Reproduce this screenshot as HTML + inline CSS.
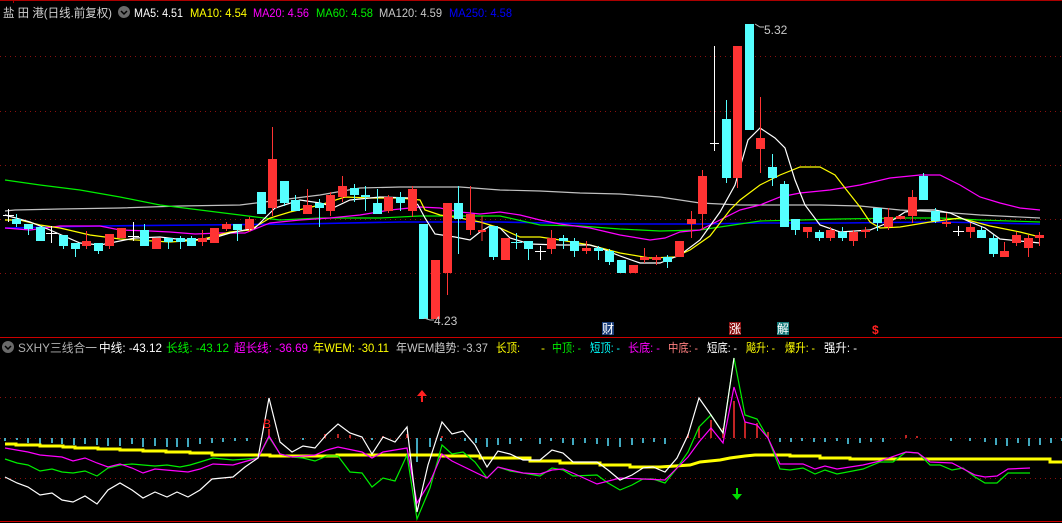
<!DOCTYPE html>
<html><head><meta charset="utf-8"><style>
html,body{margin:0;padding:0;background:#000;width:1062px;height:523px;overflow:hidden}
svg{display:block}
text{font-family:"Liberation Sans","Noto Sans CJK SC",sans-serif;font-size:12px}
</style></head><body>
<svg width="1062" height="523" viewBox="0 0 1062 523" xmlns="http://www.w3.org/2000/svg">
<rect width="1062" height="523" fill="#000"/>
<line x1="0" y1="0.5" x2="1062" y2="0.5" stroke="#a00"/>
<line x1="13.5" y1="0" x2="13.5" y2="3" stroke="#a00"/>
<!-- grid -->
<g stroke="#8a1010" stroke-dasharray="1,4">
<line x1="0" y1="56.5" x2="1062" y2="56.5"/><line x1="0" y1="111.5" x2="1062" y2="111.5"/>
<line x1="0" y1="165.5" x2="1062" y2="165.5"/><line x1="0" y1="219.5" x2="1062" y2="219.5"/>
<line x1="0" y1="273.5" x2="1062" y2="273.5"/>
<line x1="0" y1="397.5" x2="1062" y2="397.5"/><line x1="0" y1="438.5" x2="1062" y2="438.5"/>
<line x1="0" y1="478.5" x2="1062" y2="478.5"/>
</g>
<line x1="0" y1="337.5" x2="1062" y2="337.5" stroke="#c00"/>
<line x1="0" y1="521.5" x2="1062" y2="521.5" stroke="#c00"/>

<!-- MA lines -->
<g fill="none" stroke-width="1.2">
<polyline stroke="#c0c0c0" points="5,211 15,210 60,209 120,208 180,206 240,205 280,200 320,195 360,188 400,187 430,187 460,187 500,190 540,191 580,193 620,194 660,197 700,203 740,205 780,205 820,205 860,206 900,210 940,212 980,215 1040,218"/>
<polyline stroke="#0000ff" stroke-width="1.6" points="5,228 100,226 200,225 300,224 400,222 500,222 600,224 700,224 760,223 840,223 940,222 1040,224"/>
<polyline stroke="#00ee00" points="5,180 40,185 80,190 120,197 160,205 200,210 240,215 280,220 320,218 380,218 420,216 500,216 540,225 580,226 620,229 660,231 700,230 740,224 760,221 800,220 840,219 900,218 940,218 980,220 1040,222"/>
<polyline stroke="#ff00ff" points="5,228 30,230 60,226 100,226 120,230 150,231 170,232 195,234 220,233 245,233 270,223 300,220 330,218 360,215 390,210 420,207 440,208 460,212 480,214 500,212 520,215 540,220 560,224 590,228 620,235 650,240 665,238 680,232 700,230 720,220 740,210 760,205 780,197 800,193 830,190 860,185 890,178 920,175 940,175 960,185 980,197 1000,203 1020,208 1040,210"/>
<polyline stroke="#ffff00" points="5,220 20,220 40,225 60,228 90,235 120,239 170,242 200,240 230,232 250,230 270,218 290,212 320,205 345,197 370,198 400,198 420,200 425,210 440,215 460,218 480,222 500,228 520,237 540,237 560,240 590,245 620,253 650,258 675,257 690,250 710,236 730,210 740,200 760,185 780,175 800,167 820,167 835,175 845,188 860,207 870,222 880,228 900,227 930,222 960,218 990,226 1020,232 1040,237"/>
<polyline stroke="#ffffff" points="5,215 30,222 50,230 80,243 100,245 115,242 135,238 160,237 185,240 210,239 230,233 255,228 275,208 300,200 320,203 335,207 350,200 380,197 410,198 418,205 425,218 435,234 455,237 470,240 480,232 490,226 500,228 510,238 530,244 560,245 590,245 600,248 620,256 640,263 660,263 680,255 700,240 720,212 735,185 748,140 760,128 775,138 785,148 795,180 805,205 820,225 840,232 870,230 890,222 905,212 920,210 935,210 950,213 970,222 985,228 1000,239 1030,242 1040,243"/>
</g>

<!-- candles -->
<g stroke-width="1">
<g stroke="#55ffff">
<line x1="16.5" y1="214" x2="16.5" y2="227"/><line x1="28.5" y1="224" x2="28.5" y2="235"/><line x1="40.5" y1="226" x2="40.5" y2="241"/>
<line x1="63.5" y1="235" x2="63.5" y2="249"/><line x1="75.5" y1="243" x2="75.5" y2="257"/><line x1="98.5" y1="243" x2="98.5" y2="254"/>
<line x1="144.5" y1="224" x2="144.5" y2="246"/><line x1="168.5" y1="238" x2="168.5" y2="249"/><line x1="180.5" y1="236" x2="180.5" y2="249"/>
<line x1="191.5" y1="236" x2="191.5" y2="246"/><line x1="237.5" y1="224" x2="237.5" y2="241"/><line x1="284.5" y1="181" x2="284.5" y2="206"/>
<line x1="295.5" y1="195" x2="295.5" y2="211"/><line x1="319.5" y1="199" x2="319.5" y2="227"/><line x1="354.5" y1="184" x2="354.5" y2="202"/>
<line x1="365.5" y1="186" x2="365.5" y2="211"/><line x1="377.5" y1="189" x2="377.5" y2="214"/><line x1="400.5" y1="192" x2="400.5" y2="211"/>
<line x1="458.5" y1="186" x2="458.5" y2="254"/><line x1="493.5" y1="226" x2="493.5" y2="260"/><line x1="528.5" y1="241" x2="528.5" y2="260"/>
<line x1="563.5" y1="235" x2="563.5" y2="249"/><line x1="574.5" y1="238" x2="574.5" y2="257"/><line x1="598.5" y1="246" x2="598.5" y2="260"/>
<line x1="609.5" y1="249" x2="609.5" y2="265"/><line x1="667.5" y1="255" x2="667.5" y2="268"/><line x1="726.5" y1="100" x2="726.5" y2="183"/>
<line x1="772.5" y1="154" x2="772.5" y2="186"/><line x1="784.5" y1="181" x2="784.5" y2="227"/><line x1="795.5" y1="219" x2="795.5" y2="235"/>
<line x1="819.5" y1="230" x2="819.5" y2="241"/><line x1="842.5" y1="227" x2="842.5" y2="241"/><line x1="877.5" y1="208" x2="877.5" y2="231"/>
<line x1="923.5" y1="173" x2="923.5" y2="200"/><line x1="935.5" y1="208" x2="935.5" y2="223"/><line x1="981.5" y1="227" x2="981.5" y2="238"/>
<line x1="993.5" y1="235" x2="993.5" y2="257"/>
</g>
<g stroke="#ff3333">
<line x1="86.5" y1="231" x2="86.5" y2="249"/><line x1="109.5" y1="234" x2="109.5" y2="249"/><line x1="202.5" y1="230" x2="202.5" y2="246"/>
<line x1="226.5" y1="222" x2="226.5" y2="231"/><line x1="249.5" y1="217" x2="249.5" y2="232"/><line x1="272.5" y1="127" x2="272.5" y2="216"/>
<line x1="307.5" y1="189" x2="307.5" y2="214"/><line x1="330.5" y1="192" x2="330.5" y2="216"/><line x1="342.5" y1="176" x2="342.5" y2="202"/>
<line x1="388.5" y1="195" x2="388.5" y2="213"/><line x1="412.5" y1="186" x2="412.5" y2="217"/><line x1="447.5" y1="203" x2="447.5" y2="295"/>
<line x1="470.5" y1="186" x2="470.5" y2="235"/><line x1="482" y1="216" x2="482" y2="241"/><line x1="551.5" y1="230" x2="551.5" y2="254"/>
<line x1="586.5" y1="241" x2="586.5" y2="254"/><line x1="644.5" y1="248" x2="644.5" y2="263"/><line x1="656.5" y1="255" x2="656.5" y2="265"/>
<line x1="691.5" y1="211" x2="691.5" y2="238"/><line x1="702.5" y1="170" x2="702.5" y2="230"/><line x1="737.5" y1="46" x2="737.5" y2="188"/>
<line x1="760.5" y1="97" x2="760.5" y2="173"/><line x1="807.5" y1="227" x2="807.5" y2="238"/><line x1="830.5" y1="227" x2="830.5" y2="241"/>
<line x1="853.5" y1="230" x2="853.5" y2="246"/><line x1="865.5" y1="227" x2="865.5" y2="238"/><line x1="888.5" y1="208" x2="888.5" y2="230"/>
<line x1="912.5" y1="190" x2="912.5" y2="223"/><line x1="946.5" y1="213" x2="946.5" y2="227"/><line x1="970.5" y1="223" x2="970.5" y2="238"/>
<line x1="1004.5" y1="242" x2="1004.5" y2="257"/><line x1="1016.5" y1="232" x2="1016.5" y2="246"/><line x1="1028.5" y1="235" x2="1028.5" y2="257"/>
<line x1="1039.5" y1="232" x2="1039.5" y2="246"/>
</g>
<g stroke="#ffffff">
<line x1="8.5" y1="209" x2="8.5" y2="222"/><line x1="3" y1="215.5" x2="14" y2="215.5"/>
<line x1="51.5" y1="226" x2="51.5" y2="243"/><line x1="46" y1="233.5" x2="57" y2="233.5"/>
<line x1="133.5" y1="222" x2="133.5" y2="241"/><line x1="128" y1="236.5" x2="139" y2="236.5"/>
<line x1="540.5" y1="246" x2="540.5" y2="260"/><line x1="535" y1="251.5" x2="546" y2="251.5"/>
<line x1="714.5" y1="46" x2="714.5" y2="151"/><line x1="710" y1="143.5" x2="719" y2="143.5"/>
<line x1="958.5" y1="226" x2="958.5" y2="236"/><line x1="953" y1="231.5" x2="964" y2="231.5"/>
</g>
<g stroke="#55ffff"><line x1="516.5" y1="233" x2="516.5" y2="249"/><line x1="511" y1="242.5" x2="522" y2="242.5"/></g>
<g fill="#55ffff">
<rect x="12" y="219" width="9" height="5"/><rect x="24" y="224" width="9" height="5"/><rect x="36" y="227" width="9" height="14"/>
<rect x="59" y="235" width="9" height="11"/><rect x="71" y="243" width="9" height="6"/><rect x="94" y="243" width="9" height="8"/>
<rect x="140" y="230" width="9" height="16"/><rect x="164" y="238" width="9" height="4"/><rect x="176" y="238" width="9" height="4"/>
<rect x="187" y="238" width="9" height="8"/><rect x="233" y="224" width="9" height="6"/><rect x="257" y="192" width="9" height="22"/>
<rect x="280" y="181" width="9" height="22"/><rect x="291" y="200" width="9" height="11"/><rect x="315" y="203" width="9" height="5"/>
<rect x="350" y="188" width="9" height="7"/><rect x="361" y="195" width="9" height="2"/><rect x="373" y="203" width="9" height="11"/>
<rect x="396" y="197" width="9" height="6"/><rect x="419" y="224" width="9" height="95"/><rect x="454" y="203" width="9" height="16"/>
<rect x="489" y="226" width="9" height="31"/><rect x="524" y="241" width="9" height="8"/><rect x="559" y="238" width="9" height="3"/>
<rect x="570" y="241" width="9" height="10"/><rect x="594" y="248" width="9" height="3"/><rect x="605" y="251" width="9" height="11"/>
<rect x="617" y="260" width="9" height="13"/><rect x="663" y="257" width="9" height="5"/><rect x="722" y="119" width="9" height="59"/>
<rect x="745" y="24" width="9" height="106"/><rect x="768" y="167" width="9" height="11"/><rect x="780" y="184" width="9" height="43"/>
<rect x="791" y="219" width="9" height="11"/><rect x="815" y="232" width="9" height="6"/><rect x="838" y="232" width="9" height="6"/>
<rect x="873" y="208" width="9" height="15"/><rect x="919" y="176" width="9" height="24"/><rect x="931" y="211" width="9" height="10"/>
<rect x="977" y="230" width="9" height="8"/><rect x="989" y="238" width="9" height="16"/>
</g>
<g fill="#ff3333">
<rect x="82" y="241" width="9" height="5"/><rect x="105" y="234" width="9" height="12"/><rect x="117" y="228" width="9" height="10"/>
<rect x="152" y="238" width="9" height="11"/><rect x="198" y="238" width="9" height="4"/><rect x="210" y="228" width="9" height="15"/>
<rect x="222" y="224" width="9" height="5"/><rect x="245" y="219" width="9" height="10"/><rect x="268" y="159" width="9" height="49"/>
<rect x="303" y="205" width="9" height="9"/><rect x="326" y="195" width="9" height="16"/><rect x="338" y="186" width="9" height="11"/>
<rect x="384" y="197" width="9" height="14"/><rect x="408" y="189" width="9" height="22"/><rect x="431" y="260" width="9" height="59"/>
<rect x="443" y="203" width="9" height="70"/><rect x="466" y="214" width="9" height="16"/><rect x="478" y="230" width="8" height="2"/>
<rect x="501" y="238" width="9" height="22"/><rect x="547" y="238" width="9" height="11"/><rect x="582" y="248" width="9" height="3"/>
<rect x="629" y="265" width="9" height="8"/><rect x="640" y="257" width="9" height="3"/><rect x="652" y="257" width="9" height="3"/>
<rect x="675" y="241" width="9" height="16"/><rect x="687" y="219" width="9" height="5"/><rect x="698" y="176" width="9" height="38"/>
<rect x="733" y="46" width="9" height="132"/><rect x="756" y="138" width="9" height="11"/><rect x="803" y="227" width="9" height="5"/>
<rect x="826" y="230" width="9" height="8"/><rect x="849" y="232" width="9" height="9"/><rect x="861" y="230" width="9" height="2"/>
<rect x="884" y="217" width="9" height="10"/><rect x="896" y="216" width="9" height="3"/><rect x="908" y="197" width="9" height="19"/>
<rect x="942" y="222" width="9" height="2"/><rect x="966" y="227" width="9" height="5"/><rect x="1000" y="251" width="9" height="6"/>
<rect x="1012" y="235" width="9" height="8"/><rect x="1024" y="238" width="9" height="10"/><rect x="1035" y="235" width="9" height="3"/>
</g>
</g>

<polyline points="755,24 760,27 764,27" fill="none" stroke="#bbb"/>
<text x="764" y="34" fill="#c8c8c8">5.32</text>
<polyline points="424,318 430,320 434,320" fill="none" stroke="#bbb"/>
<text x="434" y="325" fill="#c8c8c8">4.23</text>

<rect x="602" y="322" width="12" height="13" fill="#1a3d78"/><text x="602" y="333" fill="#fff">财</text>
<rect x="729" y="322" width="12" height="13" fill="#8a1010"/><text x="729" y="333" fill="#fff">涨</text>
<rect x="777" y="322" width="12" height="13" fill="#137878"/><text x="777" y="333" fill="#fff">解</text>
<text x="872" y="334" fill="#ff2020" font-weight="bold">$</text>

<!-- header -->
<text x="3" y="17" fill="#d0d0d0" font-size="13" textLength="109" lengthAdjust="spacingAndGlyphs">盐 田 港(日线.前复权)</text>
<circle cx="124" cy="12" r="6" fill="#6a6a6a"/><polyline points="121,11 124,14 127,11" fill="none" stroke="#000" stroke-width="1.5"/>
<g font-size="13">
<text x="134" y="17" fill="#fff" textLength="49" lengthAdjust="spacingAndGlyphs">MA5: 4.51</text>
<text x="190" y="17" fill="#ffff00" textLength="57" lengthAdjust="spacingAndGlyphs">MA10: 4.54</text>
<text x="253" y="17" fill="#ff00ff" textLength="56" lengthAdjust="spacingAndGlyphs">MA20: 4.56</text>
<text x="316" y="17" fill="#00ee00" textLength="57" lengthAdjust="spacingAndGlyphs">MA60: 4.58</text>
<text x="379" y="17" fill="#c8c8c8" textLength="63" lengthAdjust="spacingAndGlyphs">MA120: 4.59</text>
<text x="449" y="17" fill="#0000ff" textLength="63" lengthAdjust="spacingAndGlyphs">MA250: 4.58</text>
</g>

<!-- indicator header -->
<circle cx="8" cy="347" r="6" fill="#6a6a6a"/><polyline points="5,346 8,349 11,346" fill="none" stroke="#000" stroke-width="1.5"/>
<g font-size="13">
<text x="18" y="352" fill="#b0b0b0" textLength="79" lengthAdjust="spacingAndGlyphs">SXHY三线合一</text>
<text x="99" y="352" fill="#fff" textLength="63" lengthAdjust="spacingAndGlyphs">中线: -43.12</text>
<text x="166" y="352" fill="#00ee00" textLength="63" lengthAdjust="spacingAndGlyphs">长线: -43.12</text>
<text x="234" y="352" fill="#ff00ff" textLength="74" lengthAdjust="spacingAndGlyphs">超长线: -36.69</text>
<text x="313" y="352" fill="#ffff00" textLength="76" lengthAdjust="spacingAndGlyphs">年WEM: -30.11</text>
<text x="396" y="352" fill="#c8c8c8" textLength="92" lengthAdjust="spacingAndGlyphs">年WEM趋势: -3.37</text>
<text x="496" y="352" fill="#ffff00" textLength="24" lengthAdjust="spacingAndGlyphs">长顶:</text>
<text x="541" y="352" fill="#ffff00">-</text>
<text x="552" y="352" fill="#00ee00" textLength="29" lengthAdjust="spacingAndGlyphs">中顶: -</text>
<text x="590" y="352" fill="#00ffff" textLength="30" lengthAdjust="spacingAndGlyphs">短顶: -</text>
<text x="628" y="352" fill="#ff00ff" textLength="32" lengthAdjust="spacingAndGlyphs">长底: -</text>
<text x="668" y="352" fill="#ff8080" textLength="30" lengthAdjust="spacingAndGlyphs">中底: -</text>
<text x="707" y="352" fill="#fff" textLength="30" lengthAdjust="spacingAndGlyphs">短底: -</text>
<text x="746" y="352" fill="#ffff00" textLength="29" lengthAdjust="spacingAndGlyphs">飚升: -</text>
<text x="785" y="352" fill="#ffff00" textLength="30" lengthAdjust="spacingAndGlyphs">爆升: -</text>
<text x="824" y="352" fill="#fff" textLength="33" lengthAdjust="spacingAndGlyphs">强升: -</text>
</g>

<!-- indicator ticks -->
<g stroke="#55e0ff" stroke-width="1.5">
<line x1="5" y1="438" x2="5" y2="441"/><line x1="17" y1="438" x2="17" y2="440"/><line x1="28" y1="438" x2="28" y2="443"/>
<line x1="40" y1="438" x2="40" y2="445"/><line x1="52" y1="438" x2="52" y2="443"/><line x1="62" y1="438" x2="62" y2="444"/>
<line x1="74" y1="438" x2="74" y2="445"/><line x1="85" y1="438" x2="85" y2="444"/><line x1="97" y1="438" x2="97" y2="445"/>
<line x1="108" y1="438" x2="108" y2="446"/><line x1="120" y1="438" x2="120" y2="446"/><line x1="132" y1="438" x2="132" y2="444"/>
<line x1="143" y1="438" x2="143" y2="447"/><line x1="155" y1="438" x2="155" y2="446"/><line x1="167" y1="438" x2="167" y2="447"/>
<line x1="177" y1="438" x2="177" y2="447"/><line x1="188" y1="438" x2="188" y2="447"/><line x1="200" y1="438" x2="200" y2="444"/>
<line x1="212" y1="438" x2="212" y2="443"/><line x1="223" y1="438" x2="223" y2="442"/><line x1="235" y1="438" x2="235" y2="441"/>
<line x1="247" y1="438" x2="247" y2="441"/><line x1="303" y1="438" x2="303" y2="440"/><line x1="372" y1="438" x2="372" y2="440"/>
<line x1="417" y1="438" x2="417" y2="462"/><line x1="430" y1="438" x2="430" y2="447"/><line x1="441" y1="438" x2="441" y2="441"/>
<line x1="465" y1="438" x2="465" y2="441"/><line x1="476" y1="438" x2="476" y2="443"/><line x1="487" y1="438" x2="487" y2="447"/>
<line x1="498" y1="438" x2="498" y2="445"/><line x1="510" y1="438" x2="510" y2="444"/><line x1="521" y1="438" x2="521" y2="441"/>
<line x1="540" y1="438" x2="540" y2="444"/><line x1="551" y1="438" x2="551" y2="441"/><line x1="563" y1="438" x2="563" y2="443"/>
<line x1="573" y1="438" x2="573" y2="445"/><line x1="585" y1="438" x2="585" y2="443"/><line x1="597" y1="438" x2="597" y2="444"/>
<line x1="608" y1="438" x2="608" y2="446"/><line x1="620" y1="438" x2="620" y2="447"/><line x1="632" y1="438" x2="632" y2="445"/>
<line x1="643" y1="438" x2="643" y2="443"/><line x1="654" y1="438" x2="654" y2="442"/><line x1="665" y1="438" x2="665" y2="444"/>
<line x1="780" y1="438" x2="780" y2="442"/><line x1="791" y1="438" x2="791" y2="442"/><line x1="802" y1="438" x2="802" y2="441"/>
<line x1="814" y1="438" x2="814" y2="442"/><line x1="825" y1="438" x2="825" y2="442"/><line x1="837" y1="438" x2="837" y2="441"/>
<line x1="848" y1="438" x2="848" y2="444"/><line x1="860" y1="438" x2="860" y2="443"/><line x1="871" y1="438" x2="871" y2="442"/>
<line x1="883" y1="438" x2="883" y2="442"/><line x1="951" y1="438" x2="951" y2="441"/><line x1="970" y1="438" x2="970" y2="441"/>
<line x1="985" y1="438" x2="985" y2="442"/><line x1="996" y1="438" x2="996" y2="445"/><line x1="1007" y1="438" x2="1007" y2="446"/>
<line x1="1018" y1="438" x2="1018" y2="443"/><line x1="1029" y1="438" x2="1029" y2="446"/><line x1="1040" y1="438" x2="1040" y2="445"/>
<line x1="1051" y1="438" x2="1051" y2="443"/><line x1="1062" y1="438" x2="1062" y2="441"/>
</g>
<g stroke="#ff3030" stroke-width="1.5">
<line x1="325" y1="434" x2="325" y2="438"/><line x1="338" y1="434" x2="338" y2="438"/><line x1="350" y1="435" x2="350" y2="438"/>
<line x1="383" y1="436" x2="383" y2="438"/><line x1="407" y1="434" x2="407" y2="438"/><line x1="442" y1="436" x2="442" y2="438"/>
<line x1="688" y1="434" x2="688" y2="438"/><line x1="699" y1="427" x2="699" y2="438"/><line x1="711" y1="420" x2="711" y2="438"/>
<line x1="723" y1="428" x2="723" y2="438"/><line x1="734" y1="401" x2="734" y2="438"/><line x1="745" y1="422" x2="745" y2="438"/>
<line x1="757" y1="423" x2="757" y2="438"/><line x1="768" y1="432" x2="768" y2="438"/>
<line x1="906" y1="435" x2="906" y2="438"/><line x1="917" y1="436" x2="917" y2="438"/>
<line x1="269" y1="429" x2="269" y2="436"/>
</g>

<g fill="none" stroke-width="1.2">
<polyline stroke="#ffff00" stroke-width="3" points="5,444 16,444 16,445 40,445 40,446 63,446 63,447 75,447 75,448 98,448 98,449 120,449 120,450 143,450 143,451 166,451 166,452 190,452 190,453 212,453 212,455 270,455 270,456 337,456 337,455 440,455 440,456 480,456 480,458 530,458 530,461 560,461 560,463 600,463 600,465 630,465 630,467 660,467 660,467 690,465 700,462 720,460 730,458 745,456 755,455 760,455 790,455 790,456 820,456 820,458 850,458 850,459 1050,459 1050,462 1062,462"/>
<polyline stroke="#00ee00" points="5,459 17,463 28,465 40,471 52,469 62,472 73,473 85,471 97,476 108,468 120,465 132,464 143,465 155,466 167,465 180,467 190,465 200,462 213,458 233,460 247,459 258,458 269,437 280,454 292,457 303,458 315,461 327,456 338,456 350,472 362,473 372,487 383,478 395,481 407,455 417,519 430,488 442,445 452,454 463,452 475,462 487,478 498,467 510,471 523,473 540,476 552,468 563,470 573,476 597,475 608,483 620,490 632,485 643,479 653,479 665,483 677,468 688,452 699,427 711,415 723,433 734,358 745,415 757,419 768,438 780,469 790,470 803,468 815,474 825,470 837,474 863,469 880,462 893,462 906,452 918,453 930,465 940,465 952,470 963,468 975,477 985,483 997,483 1008,473 1030,473"/>
<polyline stroke="#ff00ff" points="5,448 28,452 40,455 62,457 73,461 85,458 97,463 108,467 120,464 132,468 143,473 155,469 177,471 188,472 200,469 213,464 233,465 247,461 258,458 269,436 280,454 292,457 315,455 327,450 338,447 362,452 372,458 383,452 407,448 417,503 430,482 442,454 452,461 487,478 498,467 510,470 523,473 540,474 552,470 563,469 575,474 597,484 620,478 643,479 665,480 677,468 688,457 699,442 711,428 723,443 734,387 745,422 757,425 768,438 780,464 803,464 815,469 825,466 837,469 863,465 880,461 906,452 918,453 930,462 952,463 975,475 985,477 997,476 1008,469 1030,468"/>
<polyline stroke="#ffffff" points="5,477 17,483 28,487 40,495 52,493 62,500 73,502 85,496 97,504 108,490 120,483 132,490 143,498 155,492 167,497 177,492 188,497 200,490 212,479 233,477 245,467 258,458 269,398 280,442 292,452 303,446 315,448 327,434 338,424 350,433 362,437 372,454 383,437 395,442 407,427 417,512 428,465 442,422 452,434 463,431 475,445 487,467 498,451 510,454 523,460 540,460 552,450 563,453 573,462 597,462 608,470 620,480 632,475 643,468 653,467 665,472 677,458 688,435 699,398 711,415 723,433 734,358"/>
</g>
<text x="263" y="428" fill="#ff2020" font-size="14">B</text>
<polygon points="422,390 417,396 421,396 421,402 423,402 423,396 427,396" fill="#ff2020"/>
<polygon points="737,500 732,494 736,494 736,488 738,488 738,494 742,494" fill="#00dd00"/>
</svg>
</body></html>
